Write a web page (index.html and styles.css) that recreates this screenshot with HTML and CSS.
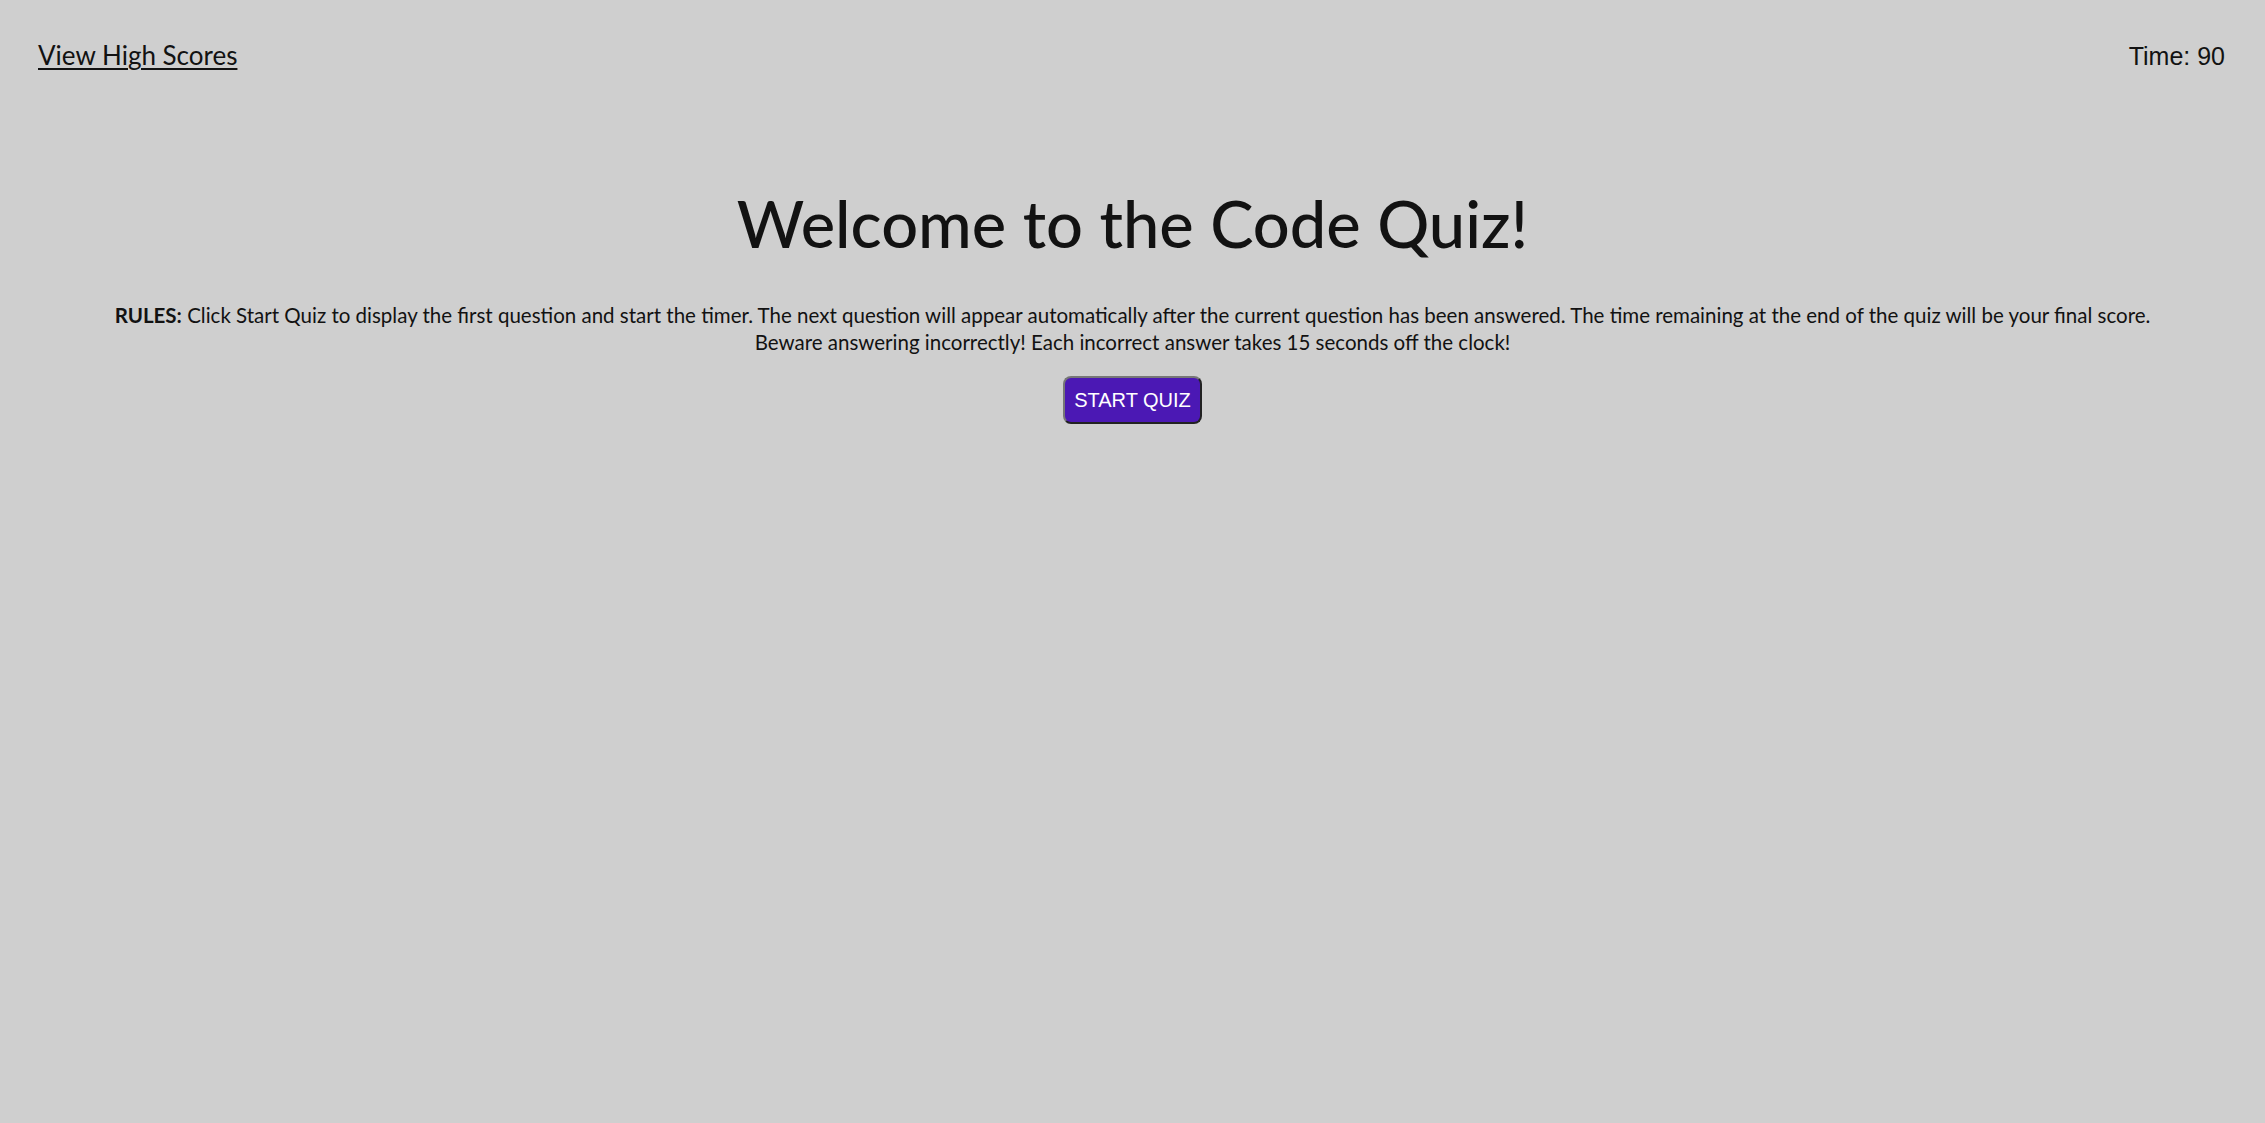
FILE: index.html
```html
<!DOCTYPE html>
<html lang="en">
<head>
<meta charset="utf-8">
<title>Code Quiz</title>
<link rel="stylesheet" href="styles.css">
</head>
<body>
<header class="top-bar">
  <a class="scores-link" href="#">View High Scores</a>
  <div class="timer">Time: <span>90</span></div>
</header>
<main class="intro">
  <h1 class="title">Welcome to the Code Quiz!</h1>
  <p class="rules"><strong>RULES:</strong> Click Start Quiz to display the first question and start the timer. The next question will appear automatically after the current question has been answered. The time remaining at the end of the quiz will be your final score. Beware answering incorrectly! Each incorrect answer takes 15 seconds off the clock!</p>
  <button class="start-btn" type="button">START QUIZ</button>
</main>
</body>
</html>
```
FILE: styles.css
```css
html, body {
  margin: 0;
  padding: 0;
}
body {
  background: #cfcfcf;
  color: #121212;
  font-family: "Lato", "Noto Sans", sans-serif;
  min-height: 100vh;
}
.top-bar {
  display: flex;
  justify-content: space-between;
  align-items: baseline;
  padding: 39px 40px 0 38px;
}
.scores-link {
  color: #121212;
  font-size: 26px;
  text-decoration: underline;
  text-underline-offset: 3px;
  text-decoration-thickness: 2px;
}
.timer {
  font-family: "Liberation Sans", Arial, sans-serif;
  font-size: 25px;
}
.intro {
  display: flex;
  flex-direction: column;
  align-items: center;
  padding: 0 100px;
}
.title {
  font-size: 65px;
  font-weight: 500;
  margin: 113px 0 0;
  line-height: 1.2;
}
.rules {
  font-size: 20.5px;
  line-height: 27px;
  text-align: center;
  margin: 40px 0 0;
}
.rules strong {
  font-weight: 700;
}
.start-btn {
  margin-top: 20px;
  font-family: "Liberation Sans", Arial, sans-serif;
  font-size: 20px;
  color: #fff;
  background: #4b18b4;
  border: 2px solid;
  border-color: #777 #222 #222 #777;
  border-radius: 8px;
  padding: 11px 9px;
  line-height: 22px;
}
```
